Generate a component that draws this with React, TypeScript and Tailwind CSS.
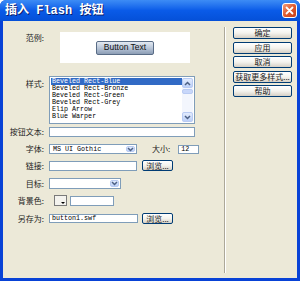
const cjk = { fontFamily: '"Noto Sans CJK SC", "Noto Sans", sans-serif' };
const mono = { fontFamily: '"Liberation Mono", "DejaVu Sans Mono", monospace' };

const styles = [
  "Beveled Rect-Blue",
  "Beveled Rect-Bronze",
  "Beveled Rect-Green",
  "Beveled Rect-Grey",
  "Elip Arrow",
  "Blue Warper",
];

const sideButtons = ["确定", "应用", "取消", "获取更多样式...", "帮助"];

function Chevron({ up = false }: { up?: boolean }) {
  return (
    <svg width="7" height="5" viewBox="0 0 7 5">
      <path
        d={up ? "M1 4 L3.5 1.5 L6 4" : "M1 1 L3.5 3.5 L6 1"}
        fill="none"
        stroke="#4D6185"
        strokeWidth="1.5"
      />
    </svg>
  );
}

function ArrowBox({ up = false, className = "" }: { up?: boolean; className?: string }) {
  return (
    <div
      className={`flex items-center justify-center rounded-[2px] border border-[#B9CBF3] bg-linear-to-b from-[#E3ECFD] to-[#BCD0F8] ${className}`}
    >
      <Chevron up={up} />
    </div>
  );
}

function Label({ text, className = "" }: { text: string; className?: string }) {
  return (
    <div className={`w-[41px] shrink-0 text-right text-[8px] leading-[10px] text-[#222] ${className}`} style={cjk}>
      {text}
    </div>
  );
}

function TextBox({ value = "", className = "" }: { value?: string; className?: string }) {
  return (
    <div
      className={`flex items-center border border-[#7F9DB9] bg-white pl-[2px] text-[6.7px] leading-[7px] text-black ${className}`}
      style={mono}
    >
      {value}
    </div>
  );
}

function Select({ value = "", className = "" }: { value?: string; className?: string }) {
  return (
    <div className={`flex items-stretch border border-[#7F9DB9] bg-white p-px ${className}`}>
      <div className="flex flex-1 items-center pl-[2px] text-[6.7px] leading-[7px] text-black" style={mono}>
        {value}
      </div>
      <ArrowBox className="w-[9px]" />
    </div>
  );
}

function XpButton({ text, className = "" }: { text: string; className?: string }) {
  return (
    <div
      className={`flex items-center justify-center rounded-[2px] border border-[#003C74] bg-linear-to-b from-white via-[#F4F3EE] to-[#D6D0C5] text-[8px] leading-none whitespace-nowrap text-[#222] ${className}`}
      style={cjk}
    >
      {text}
    </div>
  );
}

export default function App() {
  return (
    <div className="flex h-[281px] w-[300px] flex-col overflow-hidden rounded-t-[6px] bg-[#0842D6]">
      {/* Title bar */}
      <div className="flex h-[21px] shrink-0 items-center justify-between bg-linear-to-b from-[#3D8CF5] via-[#0A5BE8] to-[#0550D8] pr-[3px] pl-[5px]">
        <span className="text-[12px] font-bold text-white [text-shadow:1px_1px_0_#0A1E6E]" style={{ fontFamily: '"Liberation Mono", "Noto Sans CJK SC", monospace' }}>
          插入 Flash 按钮
        </span>
        <div className="flex h-[15px] w-[15px] items-center justify-center rounded-[3px] border border-white bg-linear-to-br from-[#F19A78] via-[#E05A2E] to-[#C5401A]">
          <svg width="9" height="9" viewBox="0 0 9 9">
            <path d="M1.5 1.5 L7.5 7.5 M7.5 1.5 L1.5 7.5" stroke="white" strokeWidth="1.8" strokeLinecap="round" />
          </svg>
        </div>
      </div>

      {/* Body */}
      <div className="mx-[3px] mb-[3px] flex flex-1 bg-[#ECE9D8]">
        {/* Left form */}
        <div className="flex w-[221px] shrink-0 flex-col">
          {/* 范例 */}
          <div className="mt-[11px] flex items-start">
            <Label text="范例:" className="pt-px" />
            <div className="ml-[16px] flex h-[31px] w-[130px] items-center justify-center bg-white">
              <div
                className="flex h-[14px] w-[58px] items-center justify-center rounded-[2px] border border-[#596C86] bg-linear-to-b from-[#E4EAF2] via-[#B9C6D8] to-[#8C9DB5] text-[8.5px] text-[#111]"
                style={{ fontFamily: '"Liberation Sans", Arial, sans-serif' }}
              >
                Button Text
              </div>
            </div>
          </div>

          {/* 样式 */}
          <div className="mt-[13px] flex items-start">
            <Label text="样式:" className="pt-[3px]" />
            <div className="ml-[5px] flex h-[48px] w-[146px] border border-[#7F9DB9] bg-white p-px">
              <div className="flex flex-1 flex-col">
                {styles.map((s, i) => (
                  <div
                    key={s}
                    className={`h-[7px] pl-px text-[6.7px] leading-[7px] ${i === 0 ? "bg-[#316AC5] text-white" : "text-black"}`}
                    style={mono}
                  >
                    {s}
                  </div>
                ))}
              </div>
              <div className="flex w-[11px] flex-col bg-[#F3F6FD]">
                <ArrowBox up className="h-[10px]" />
                <div className="mt-px h-[5px] rounded-[2px] border border-[#B9CBF3] bg-[#C8D7FA]" />
                <div className="flex-1" />
                <ArrowBox className="h-[10px]" />
              </div>
            </div>
          </div>

          {/* 按钮文本 */}
          <div className="mt-[3px] flex items-center">
            <Label text="按钮文本:" />
            <TextBox className="ml-[5px] h-[10px] w-[146px]" />
          </div>

          {/* 字体 / 大小 */}
          <div className="mt-[7px] flex items-center">
            <Label text="字体:" />
            <Select value="MS UI Gothic" className="ml-[5px] h-[10px] w-[88px]" />
            <span className="ml-[15px] text-[8px] leading-[10px] text-[#222]" style={cjk}>
              大小:
            </span>
            <TextBox value="12" className="ml-[8px] h-[9px] w-[21px]" />
          </div>

          {/* 链接 */}
          <div className="mt-[6px] flex items-center">
            <Label text="链接:" />
            <TextBox className="ml-[5px] h-[10px] w-[88px]" />
            <XpButton text="浏览..." className="ml-[5px] h-[11px] w-[31px]" />
          </div>

          {/* 目标 */}
          <div className="mt-[7px] flex items-center">
            <Label text="目标:" />
            <Select className="ml-[5px] h-[11px] w-[72px]" />
          </div>

          {/* 背景色 */}
          <div className="mt-[6px] flex items-center">
            <Label text="背景色:" />
            <div className="relative ml-[10px] h-[11px] w-[13px] border border-[#7A7A7A] bg-[#F4F3EE]">
              <div className="absolute right-px bottom-px h-0 w-0 border-x-[2px] border-t-[2px] border-x-transparent border-t-black" />
            </div>
            <TextBox className="ml-[3px] h-[10px] w-[44px]" />
          </div>

          {/* 另存为 */}
          <div className="mt-[7px] flex items-center">
            <Label text="另存为:" />
            <TextBox value="button1.swf" className="ml-[5px] h-[9px] w-[89px]" />
            <XpButton text="浏览..." className="ml-[4px] h-[11px] w-[31px]" />
          </div>
        </div>

        {/* Separator */}
        <div className="mt-[6px] mb-[5px] w-[2px] shrink-0 border-r border-white bg-[#ACA899]" />

        {/* Right buttons */}
        <div className="mt-[6px] ml-[7px] flex flex-col gap-[2.5px]">
          {sideButtons.map((b) => (
            <XpButton key={b} text={b} className="h-[12px] w-[59px]" />
          ))}
        </div>
      </div>
    </div>
  );
}
